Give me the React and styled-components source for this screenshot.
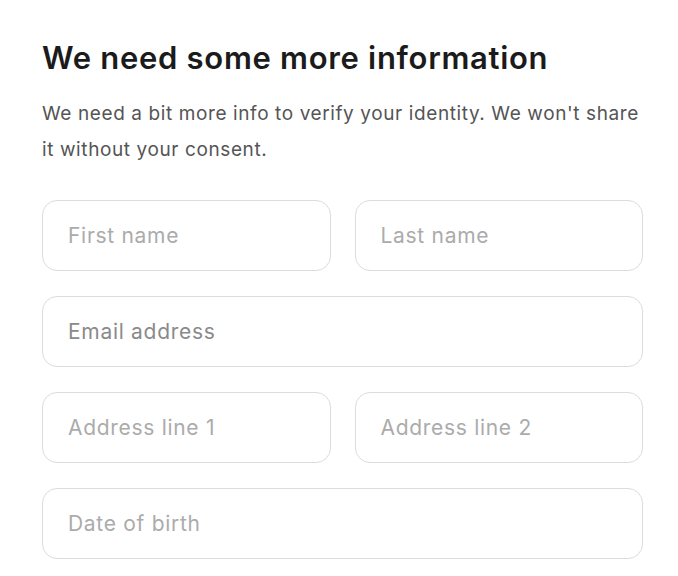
import React from "react";
import styled, { createGlobalStyle } from "styled-components";

const GlobalStyle = createGlobalStyle`
  body {
    margin: 0;
    background: #ffffff;
    font-family: Inter, "Noto Sans", sans-serif;
  }
  * {
    box-sizing: border-box;
  }
`;

const Page = styled.div`
  padding: 38px 35px 0 42px;
`;

const Title = styled.h1`
  margin: 0;
  font-size: 31px;
  font-weight: 600;
  letter-spacing: 0.7px;
  color: #1b1b1b;
  line-height: 40px;
`;

const Lead = styled.p`
  margin: 18px 0 0;
  font-size: 19px;
  line-height: 36px;
  color: #555555;
  letter-spacing: 0.6px;
`;

const Form = styled.form`
  margin-top: 32px;
  display: grid;
  grid-template-columns: 1fr 1fr;
  column-gap: 24px;
  row-gap: 25px;
`;

const Field = styled.input`
  grid-column: ${(props) => (props.wide ? "1 / -1" : "auto")};
  height: 71px;
  width: 100%;
  padding: 0 25px;
  border: 1px solid #dcdcdc;
  border-radius: 15px;
  font-family: Inter, "Noto Sans", sans-serif;
  font-size: 21px;
  letter-spacing: 0.7px;
  color: #333;
  background: #fff;
  outline: none;

  &::placeholder {
    color: ${(props) => (props.dark ? "#8a8a8a" : "#ababab")};
  }
`;

export default function App() {
  return (
    <>
      <GlobalStyle />
      <Page>
        <Title>We need some more information</Title>
        <Lead>
          We need a bit more info to verify your identity. We won't share it
          without your consent.
        </Lead>
        <Form>
          <Field placeholder="First name" />
          <Field placeholder="Last name" />
          <Field wide dark placeholder="Email address" />
          <Field placeholder="Address line 1" />
          <Field placeholder="Address line 2" />
          <Field wide placeholder="Date of birth" />
        </Form>
      </Page>
    </>
  );
}
